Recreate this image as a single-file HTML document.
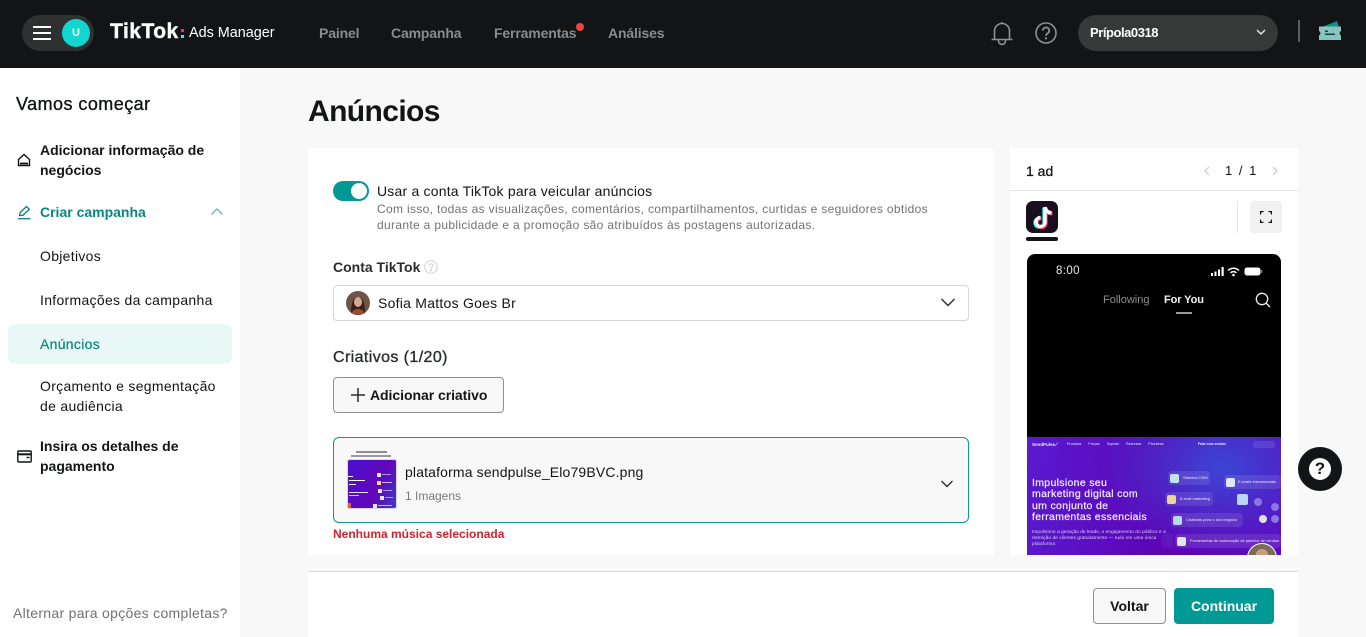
<!DOCTYPE html>
<html lang="pt"><head><meta charset="utf-8"><title>TikTok Ads Manager</title>
<style>
html,body{margin:0;padding:0}
body{width:1366px;height:637px;overflow:hidden;background:#f8f8f8;position:relative;font-family:"Liberation Sans",Arial,sans-serif;color:#121415}
.a{position:absolute;white-space:nowrap}
.nav{top:24px;font-size:14px;font-weight:700;color:#8a8b8c;line-height:18px;letter-spacing:-.15px}
.side{left:40px;font-size:14px;line-height:20px;color:#121415;letter-spacing:.3px}
.b{font-weight:700;letter-spacing:0}
svg{position:absolute;display:block}
.tiny{color:#e9e6fb;font-size:4px;line-height:5px;white-space:nowrap;position:absolute}
.chip{position:absolute;background:rgba(255,255,255,.1);border-radius:4px;height:14px}
.ic{position:absolute;width:9px;height:9px;background:#dfe6f5;border-radius:2px}
</style></head><body>
<!-- top bar -->
<div class="a" style="left:0;top:0;width:1366px;height:68px;background:#121415"></div>
<div class="a" style="left:22px;top:15px;width:72px;height:36px;border-radius:18px;background:#2f3131"></div>
<div class="a" style="left:33px;top:26px;width:18px;height:2px;background:#fff"></div>
<div class="a" style="left:33px;top:32px;width:18px;height:2px;background:#fff"></div>
<div class="a" style="left:33px;top:38px;width:18px;height:2px;background:#fff"></div>
<div class="a" style="left:62px;top:19px;width:28px;height:28px;border-radius:50%;background:#13d6d0;color:#fff;font-size:11px;font-weight:700;text-align:center;line-height:28px">U</div>
<div class="a" style="left:110px;top:19px;font-size:21px;font-weight:700;color:#fff;line-height:26px;letter-spacing:.5px;-webkit-text-stroke:.4px #fff">TikTok</div>
<div class="a" style="left:181px;top:29px;width:3px;height:3px;background:#fe2c55"></div>
<div class="a" style="left:181px;top:35px;width:3px;height:3px;background:#25f4ee"></div>
<div class="a" style="left:189px;top:24px;font-size:14.4px;color:#fff;line-height:18px">Ads Manager</div>
<div class="a nav" style="left:319px">Painel</div>
<div class="a nav" style="left:391px">Campanha</div>
<div class="a nav" style="left:494px">Ferramentas</div>
<div class="a" style="left:576px;top:23px;width:8px;height:8px;border-radius:50%;background:#f0443e"></div>
<div class="a nav" style="left:608px">Análises</div>
<svg style="left:990px;top:20px" width="24" height="26" viewBox="0 0 24 26" fill="none" stroke="#8f9090" stroke-width="1.6"><path d="M1.500 19.500h21M4.500 19.500V11a7.500 7.500 0 0 1 15 0v8.500"/><path d="M12 3.500V2"/><path d="M8.500 20v1a3.500 3.500 0 0 0 7 0v-1"/></svg>
<svg style="left:1035px;top:22px" width="22" height="22" viewBox="0 0 22 22" fill="none" stroke="#8f9090" stroke-width="1.6"><circle cx="11" cy="11" r="10"/><path d="M7.800 8.600a3.200 3.200 0 1 1 4.800 2.800c-1 .6-1.600 1.100-1.600 2.400" stroke-width="1.800"/><circle cx="11" cy="16.400" r="1.100" fill="#8f9090" stroke="none"/></svg>
<div class="a" style="left:1078px;top:15px;width:200px;height:36px;border-radius:18px;background:#373838"></div>
<div class="a" style="left:1090px;top:24px;font-size:13px;font-weight:700;color:#fff;line-height:17px;letter-spacing:-.45px">Prípola0318</div>
<svg style="left:1255px;top:28px" width="12" height="9" viewBox="0 0 12 9" fill="none" stroke="#e4e4e4" stroke-width="1.5"><path d="M2 2l4 4 4-4"/></svg>
<div class="a" style="left:1298px;top:20px;width:2px;height:22px;background:#5c5d5e"></div>
<svg style="left:1318px;top:20px" width="25" height="21" viewBox="0 0 25 21"><path d="M4 7L19 1l2 6z" fill="#0f8f88"/><path d="M1 6.500h22v4.500a2.500 2.500 0 0 0 0 4.500V20H1v-4.500a2.500 2.500 0 0 0 0-4.500z" fill="#8ac4bf"/><path d="M7 10.500h3v1.500H7zM7 13.500h10v1.500H7z" fill="#17423f"/></svg>

<!-- sidebar -->
<div class="a" style="left:0;top:68px;width:240px;height:569px;background:#fff"></div>
<div class="a" style="left:16px;top:93px;font-size:18px;line-height:22px;color:#121415;letter-spacing:.45px;-webkit-text-stroke:.35px #121415">Vamos começar</div>
<svg style="left:17px;top:153px" width="14" height="14" viewBox="0 0 14 14" fill="none" stroke="#121415" stroke-width="1.400"><path d="M1.500 6.500L7 1.500l5.500 5v6h-11z"/><path d="M3 10.500h8" stroke-width="1.800"/></svg>
<div class="a side b" style="top:140px">Adicionar informação de<br>negócios</div>
<svg style="left:17px;top:205px" width="15" height="15" viewBox="0 0 15 15" fill="none" stroke="#0a7f7b" stroke-width="1.300"><path d="M2.500 10.500L3.200 7.500 9.500 1.500l2.800 2.700-6.200 6-3.600.3z"/><path d="M1 13.700h12.500"/></svg>
<div class="a side b" style="top:202px;color:#0a8580">Criar campanha</div>
<svg style="left:210px;top:207px" width="14" height="10" viewBox="0 0 14 10" fill="none" stroke="#6db3af" stroke-width="1.300"><path d="M1.500 7.500L7 2l5.500 5.500"/></svg>
<div class="a side" style="top:246px">Objetivos</div>
<div class="a side" style="top:290px">Informações da campanha</div>
<div class="a" style="left:8px;top:324px;width:224px;height:40px;border-radius:6px;background:#e8f8f6"></div>
<div class="a side" style="top:334px;color:#0a8580;-webkit-text-stroke:.2px #0a8580">Anúncios</div>
<div class="a side" style="top:376px">Orçamento e segmentação<br>de audiência</div>
<svg style="left:17px;top:450px" width="15" height="13" viewBox="0 0 15 13" fill="none" stroke="#121415" stroke-width="1.400"><rect x=".8" y="1" width="13.400" height="11" rx="1"/><path d="M1 4.300h13" stroke-width="2"/><path d="M9.500 7.500h3"/></svg>
<div class="a side b" style="top:436px">Insira os detalhes de<br>pagamento</div>
<div class="a" style="left:13px;top:604px;font-size:14px;line-height:18px;color:#6f7071;letter-spacing:.3px">Alternar para opções completas?</div>

<!-- title -->
<div class="a" style="left:308px;top:94px;font-size:30px;line-height:36px;font-weight:700;letter-spacing:-.6px">Anúncios</div>

<!-- main card -->
<div class="a" style="left:308px;top:148px;width:686px;height:407px;background:#fff;border-radius:4px 4px 0 0"></div>
<div class="a" style="left:333px;top:181px;width:36px;height:20px;border-radius:10px;background:#009995"></div>
<div class="a" style="left:351px;top:183px;width:16px;height:16px;border-radius:50%;background:#fff"></div>
<div class="a" style="left:377px;top:182px;font-size:14px;line-height:18px;letter-spacing:.2px">Usar a conta TikTok para veicular anúncios</div>
<div class="a" style="left:377px;top:201px;font-size:12px;line-height:16px;color:#717273;letter-spacing:.33px">Com isso, todas as visualizações, comentários, compartilhamentos, curtidas e seguidores obtidos<br>durante a publicidade e a promoção são atribuídos às postagens autorizadas.</div>
<div class="a" style="left:333px;top:258px;font-size:14px;line-height:18px;font-weight:700;color:#2a2c2d">Conta TikTok</div>
<svg style="left:424px;top:260px" width="14" height="14" viewBox="0 0 14 14" fill="none" stroke="#cfd0d0" stroke-width="1"><circle cx="7" cy="7" r="6.300"/><path d="M5.200 5.600a1.800 1.800 0 1 1 2.700 1.600c-.6.300-.9.600-.9 1.300"/><circle cx="7" cy="10.300" r=".6" fill="#cfd0d0"/></svg>
<div class="a" style="left:333px;top:285px;width:634px;height:34px;border:1px solid #d5d6d6;border-radius:4px;background:#fff"></div>
<svg style="left:346px;top:291px" width="24" height="24" viewBox="0 0 24 24"><defs><clipPath id="c"><circle cx="12" cy="12" r="12"/></clipPath></defs><g clip-path="url(#c)"><rect width="24" height="24" fill="#6e5548"/><path d="M5 24c0-9 1-18 7-18s7 9 7 18z" fill="#3b2218"/><ellipse cx="12" cy="11" rx="4" ry="5" fill="#d9a890"/><path d="M5 24c1-5 4-6 7-6s6 1 7 6z" fill="#9a4a35"/></g></svg>
<div class="a" style="left:378px;top:294px;font-size:14px;line-height:18px;letter-spacing:.25px">Sofia Mattos Goes Br</div>
<svg style="left:940px;top:297px" width="16" height="11" viewBox="0 0 16 11" fill="none" stroke="#2a2c2d" stroke-width="1.400"><path d="M1.500 2L8 8.500 14.500 2"/></svg>
<div class="a" style="left:333px;top:348px;font-size:16px;line-height:20px;color:#2a2c2d;letter-spacing:.4px;-webkit-text-stroke:.35px #2a2c2d">Criativos (1/20)</div>
<div class="a" style="left:333px;top:377px;width:169px;height:34px;border:1px solid #8f9090;border-radius:4px;background:#f8f8f8"></div>
<svg style="left:351px;top:388px" width="14" height="14" viewBox="0 0 14 14" stroke="#2a2c2d" stroke-width="1.500"><path d="M7 0v14M0 7h14"/></svg>
<div class="a b" style="left:370px;top:386px;font-size:14px;line-height:18px;letter-spacing:-.05px">Adicionar criativo</div>

<div class="a" style="left:333px;top:437px;width:634px;height:84px;border:1px solid #0d9a95;border-radius:6px;background:#f8f8f8"></div>
<div class="a" style="left:356px;top:451px;width:31px;height:2px;background:#8f8f8f"></div>
<div class="a" style="left:351px;top:455px;width:40px;height:2px;background:#999"></div>
<div class="a" style="left:347px;top:459px;width:50px;height:50px;border-radius:3px;background:linear-gradient(115deg,#4a10cf,#6207b8 60%,#3a3fc5);overflow:hidden;box-shadow:inset 0 0 0 1px #d9d6ea">
 <div class="a" style="left:30px;top:14px;width:4px;height:4px;background:#dfe8ff"></div><div class="a" style="left:35px;top:15px;width:9px;height:1px;background:#a89ae6"></div>
 <div class="a" style="left:30px;top:22px;width:4px;height:4px;background:#edd99a"></div><div class="a" style="left:35px;top:23px;width:10px;height:1px;background:#c6bcf0"></div>
 <div class="a" style="left:31px;top:30px;width:4px;height:4px;background:#dfe8ff"></div><div class="a" style="left:36px;top:31px;width:9px;height:1px;background:#a89ae6"></div>
 <div class="a" style="left:33px;top:37px;width:4px;height:4px;background:#dfe8ff"></div><div class="a" style="left:38px;top:38px;width:8px;height:1px;background:#a89ae6"></div>
 <div class="a" style="left:26px;top:45px;width:4px;height:4px;background:#dfe8ff"></div><div class="a" style="left:31px;top:46px;width:14px;height:1px;background:#c6bcf0"></div>
 <div class="a" style="left:1px;top:17px;width:5px;height:1px;background:#fff"></div>
 <div class="a" style="left:2px;top:21px;width:16px;height:1px;background:#fff"></div>
 <div class="a" style="left:2px;top:25px;width:7px;height:1px;background:#fff"></div>
 <div class="a" style="left:2px;top:33px;width:19px;height:1px;background:#ddd"></div>
 <div class="a" style="left:2px;top:36px;width:10px;height:1px;background:#ccc"></div>
 <div class="a" style="left:1px;top:44px;width:3px;height:5px;background:#e0603a"></div>
</div>
<div class="a" style="left:405px;top:463px;font-size:14px;line-height:18px;letter-spacing:.15px">plataforma sendpulse_Elo79BVC.png</div>
<div class="a" style="left:405px;top:488px;font-size:12px;line-height:16px;color:#77787a">1 Imagens</div>
<svg style="left:940px;top:479px" width="14" height="10" viewBox="0 0 14 10" fill="none" stroke="#2a2c2d" stroke-width="1.400"><path d="M1.500 2L7 7.500 12.500 2"/></svg>
<div class="a b" style="left:333px;top:526px;font-size:12px;line-height:16px;color:#d2232f">Nenhuma música selecionada</div>

<!-- preview panel -->
<div class="a" style="left:1010px;top:148px;width:288px;height:407px;background:#fff"></div>
<div class="a" style="left:1010px;top:190px;width:288px;height:1px;background:#e6e6e6"></div>
<div class="a" style="left:1026px;top:162px;font-size:14px;line-height:18px;color:#121415;-webkit-text-stroke:.3px #121415">1 ad</div>
<svg style="left:1202px;top:165px" width="10" height="12" viewBox="0 0 10 12" fill="none" stroke="#c9caca" stroke-width="1.200"><path d="M7 2L3 6l4 4"/></svg>
<div class="a" style="left:1225px;top:162px;font-size:13px;line-height:18px;word-spacing:3px">1 / 1</div>
<svg style="left:1270px;top:165px" width="10" height="12" viewBox="0 0 10 12" fill="none" stroke="#c9caca" stroke-width="1.200"><path d="M3 2l4 4-4 4"/></svg>
<div class="a" style="left:1026px;top:201px;width:32px;height:32px;border-radius:7px;background:#1a0f1f"></div>
<svg style="left:1026px;top:201px" width="32" height="32" viewBox="0 0 32 32" fill="none"><g stroke-width="3.400"><g stroke="#25f4ee" transform="translate(-1 .8)"><path d="M19 6v15a4.500 4.500 0 1 1-4.500-4.500"/><path d="M19 6c.5 3.500 3 5.500 6.500 5.800"/></g><g stroke="#fe2c55" transform="translate(1 1)"><path d="M19 6v15a4.500 4.500 0 1 1-4.500-4.500"/><path d="M19 6c.5 3.500 3 5.500 6.500 5.800"/></g><g stroke="#fff"><path d="M19 6v15a4.500 4.500 0 1 1-4.500-4.500"/><path d="M19 6c.5 3.500 3 5.500 6.500 5.800"/></g></g></svg>
<div class="a" style="left:1026px;top:237px;width:32px;height:4px;border-radius:2px;background:#121415"></div>
<div class="a" style="left:1237px;top:201px;width:1px;height:32px;background:#e6e6e6"></div>
<div class="a" style="left:1250px;top:201px;width:32px;height:32px;border-radius:4px;background:#f1f1f1"></div>
<svg style="left:1260px;top:211px" width="12" height="12" viewBox="0 0 12 12" fill="none" stroke="#121415" stroke-width="1.200"><path d="M.6 3.500V.6h3M8.500.6h2.900v2.900M11.400 8.500v2.900H8.500M3.500 11.400H.6V8.500"/></svg>

<!-- phone -->
<div class="a" style="left:1027px;top:254px;width:254px;height:301px;background:#000;border-radius:8px 8px 0 0;overflow:hidden">
 <div class="a" style="left:29px;top:10px;font-size:11.500px;line-height:15px;color:#e8e8e8;letter-spacing:.4px">8:00</div>
 <svg style="left:184px;top:12px" width="52" height="11" viewBox="0 0 52 11"><path d="M0 7h2v3H0zM3.500 5.500h2V10h-2zM7 3.500h2V10H7zM10.500 1h2.200v9h-2.200z" fill="#fff"/><path d="M17 4.500a8 8 0 0 1 11 0M19.500 6.800a4.500 4.500 0 0 1 6 0" fill="none" stroke="#fff" stroke-width="1.500"/><circle cx="22.500" cy="9" r="1.300" fill="#fff"/><rect x="33.500" y="1.500" width="16" height="8" rx="2.500" fill="#fff"/><rect x="50" y="4" width="1.200" height="3" fill="#888"/></svg>
 <div class="a" style="left:76px;top:39px;font-size:11px;line-height:14px;color:#8e8e8e">Following</div>
 <div class="a" style="left:137px;top:39px;font-size:11px;line-height:14px;font-weight:700;color:#f1f1f1;letter-spacing:-.1px">For You</div>
 <div class="a" style="left:149px;top:58px;width:16px;height:1.500px;background:#999"></div>
 <svg style="left:228px;top:38px" width="16" height="16" viewBox="0 0 16 16" fill="none" stroke="#eee" stroke-width="1.300"><circle cx="7" cy="7" r="5.700"/><path d="M11 11l4 4"/></svg>
 <!-- ad image -->
 <div class="a" style="left:0;top:183px;width:254px;height:118px;background:radial-gradient(ellipse 120px 90px at 195px 30px,#3c45d4 0%,rgba(60,69,212,0) 100%),linear-gradient(100deg,#5a1ad0,#5c05b5 55%,#5e0ac0);overflow:hidden">
  <div style="position:absolute;inset:0;filter:blur(.35px)">
  <div class="tiny" style="left:5px;top:5px;font-size:4.500px;font-weight:700">SendPulse⟋</div>
  <div class="tiny" style="left:40px;top:5px;word-spacing:6px;font-size:3.600px">Produtos Preços Suporte Recursos Parceiros</div>
  <div class="tiny" style="left:171px;top:5px;font-size:3.300px;font-weight:700">Falar com vendas</div>
  <div class="chip" style="left:226px;top:4px;width:22px;height:7px;border-radius:2px"></div>
  <div class="a" style="left:5px;top:41px;font-size:10.500px;line-height:11.400px;color:#efe8ff;letter-spacing:.32px;-webkit-text-stroke:.25px #efe8ff">Impulsione seu<br>marketing digital com<br>um conjunto de<br>ferramentas essenciais</div>
  <div class="tiny" style="left:5px;top:92px;font-size:4.700px;line-height:6px;color:#d9d2f3;letter-spacing:.1px">Impulsione a geração de leads, o engajamento do público e a<br>retenção de clientes gratuitamente — tudo em uma única<br>plataforma</div>
  <div class="chip" style="left:141px;top:34px;width:42px"></div><div class="ic" style="left:143px;top:37px;background:#bfe6ef"></div><div class="tiny" style="left:156px;top:38px">Sistema CRM</div>
  <div class="chip" style="left:197px;top:38px;width:57px"></div><div class="ic" style="left:199px;top:41px"></div><div class="tiny" style="left:211px;top:42px">E-mails transacionais</div>
  <div class="chip" style="left:138px;top:55px;width:48px"></div><div class="ic" style="left:140px;top:58px;background:#ecd693"></div><div class="tiny" style="left:153px;top:59px">E-mail marketing</div>
  <div class="ic" style="left:210px;top:57px;width:11px;height:11px;background:#bcd4f7"></div>
  <div class="chip" style="left:144px;top:76px;width:72px"></div><div class="ic" style="left:146px;top:79px;background:#b9d6ef"></div><div class="tiny" style="left:159px;top:80px">Chatbots para o seu negócio</div>
  <div class="chip" style="left:134px;top:97px;width:12px;border-radius:4px 0 0 4px;background:rgba(255,255,255,.05)"></div>
  <div class="chip" style="left:148px;top:97px;width:106px"></div><div class="ic" style="left:150px;top:100px"></div><div class="tiny" style="left:163px;top:101px">Ferramentas de automação de pipeline de vendas</div>
  <div class="a" style="left:227px;top:61px;width:8px;height:8px;border-radius:50%;background:#8b76e4"></div>
  <div class="a" style="left:244px;top:66px;width:8px;height:8px;border-radius:50%;background:#8b76e4"></div>
  <div class="a" style="left:232px;top:78px;width:8px;height:8px;border-radius:50%;background:#dfe0f8"></div>
  <div class="a" style="left:244px;top:78px;width:8px;height:8px;border-radius:50%;background:#8b76e4"></div>
  </div>
  <div class="a" style="left:220px;top:106px;width:28px;height:28px;border-radius:50%;background:#7a6c55;border:1px solid #fff"></div>
  <div class="a" style="left:229px;top:112px;width:12px;height:10px;border-radius:50%;background:#c89e83"></div>
 </div>
</div>

<!-- footer -->
<div class="a" style="left:308px;top:571px;width:990px;height:66px;background:#fff;border-top:1px solid #d9d9d9;box-sizing:border-box"></div>
<div class="a b" style="left:1093px;top:588px;width:71px;height:34px;border:1px solid #8f9090;border-radius:4px;background:#f8f8f8;text-align:center;font-size:14px;line-height:34px">Voltar</div>
<div class="a b" style="left:1174px;top:588px;width:100px;height:36px;border-radius:4px;background:#009995;color:#fff;text-align:center;font-size:14px;line-height:36px">Continuar</div>

<!-- help -->
<div class="a" style="left:1298px;top:447px;width:44px;height:44px;border-radius:50%;background:#121415"></div>
<div class="a" style="left:1309px;top:458px;width:22px;height:22px;border-radius:50%;background:#fff;color:#121415;font-size:17px;font-weight:700;text-align:center;line-height:22px">?</div>
</body></html>
